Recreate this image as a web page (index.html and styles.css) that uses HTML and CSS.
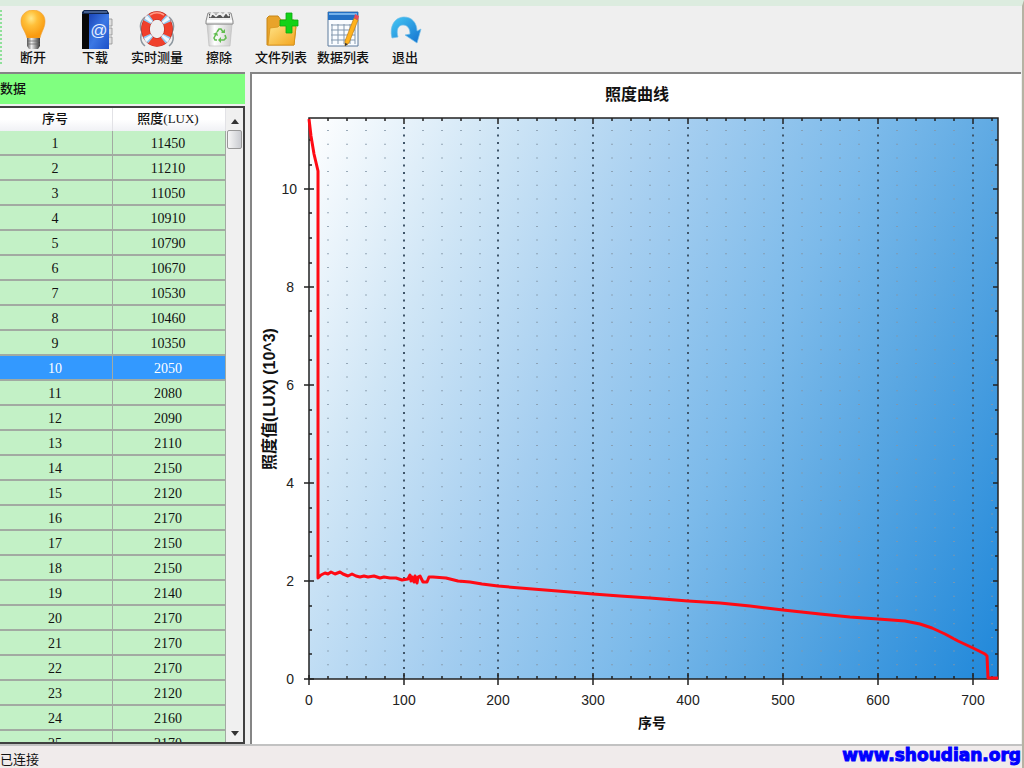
FILE: index.html
```html
<!DOCTYPE html>
<html lang="zh-CN">
<head>
<meta charset="utf-8">
<title>照度曲线</title>
<link rel="stylesheet" href="styles.css">
</head>
<body>
<div class="window">
  <header class="toolbar">
    <span class="grip"></span>
    <button class="tool" type="button">
      <svg class="icon" viewBox="0 0 36 40" aria-hidden="true">
        <defs>
          <radialGradient id="bulb" cx=".42" cy=".3" r=".65"><stop offset="0" stop-color="#ffe88a"/><stop offset=".4" stop-color="#ffc03a"/><stop offset="1" stop-color="#f99a10"/></radialGradient>
          <linearGradient id="metal"><stop offset="0" stop-color="#555"/><stop offset=".35" stop-color="#eee"/><stop offset=".7" stop-color="#888"/><stop offset="1" stop-color="#333"/></linearGradient>
        </defs>
        <path d="M18 0C11 0 6 5 6 11c0 7 4 9 6 17h13c2-8 5-10 5-17C30 5 25 0 18 0z" fill="url(#bulb)" stroke="#f0a030" stroke-width=".6"/>
        <path d="M12 28h13v8l-2 3h-9l-2-3z" fill="url(#metal)"/>
        <path d="M12 31h13M12 34h13" stroke="#666" stroke-width=".7"/>
      </svg>
      <span>断开</span>
    </button>
    <button class="tool" type="button">
      <svg class="icon" viewBox="0 0 36 40" aria-hidden="true">
        <defs><linearGradient id="book" x2="1" y2="1"><stop offset="0" stop-color="#1a45b8"/><stop offset=".5" stop-color="#3c78e4"/><stop offset="1" stop-color="#1d50c8"/></linearGradient></defs>
        <path d="M30 9h5v7h-5zM30 18h5v7h-5zM30 27h5v7h-5z" fill="#ddd" stroke="#888" stroke-width=".7"/>
        <path d="M5 2l2-2h23l2 3v36H5z" fill="#10264f"/>
        <path d="M5 4h7v35H5z" fill="#080808"/>
        <path d="M12 4h20v35H12z" fill="url(#book)"/>
        <path d="M7 2h23" stroke="#7697d0"/>
        <text class="book-mark" x="22" y="26" text-anchor="middle">@</text>
      </svg>
      <span>下载</span>
    </button>
    <button class="tool" type="button">
      <svg class="icon" viewBox="0 0 36 40" aria-hidden="true">
        <path d="M6 7C0 12 1 19 3 22c-2 5-2 10 3 14M30 7c6 5 5 12 3 15 2 5 2 10-3 14" fill="none" stroke="#8c969e" stroke-width="1.5"/>
        <ellipse cx="18" cy="19" rx="11.500" ry="13.500" fill="none" stroke="#b5241a" stroke-width="8.600"/>
        <ellipse cx="18" cy="19" rx="11.500" ry="13.500" fill="none" stroke="#f0402c" stroke-width="7.500"/>
        <ellipse cx="18" cy="19" rx="11.500" ry="13.500" fill="none" stroke="#8fc9f2" stroke-width="8" stroke-dasharray="6 13.700" stroke-dashoffset="-6.800"/>
        <ellipse cx="18" cy="19" rx="11.500" ry="13.500" fill="none" stroke="#eef8ff" stroke-width="8" stroke-dasharray="3 16.700" stroke-dashoffset="-8.300"/>
        <path d="M11 5a14 15 0 0 1 14 0" fill="none" stroke="#ff9a86" stroke-width="1.500"/>
      </svg>
      <span>实时测量</span>
    </button>
    <button class="tool" type="button">
      <svg class="icon" viewBox="0 0 36 40" aria-hidden="true">
        <defs><linearGradient id="bin"><stop offset="0" stop-color="#c8c8c8"/><stop offset=".3" stop-color="#fff"/><stop offset="1" stop-color="#ccc"/></linearGradient></defs>
        <path d="M6 14h25l-2 22H8z" fill="url(#bin)" stroke="#bbb" stroke-width=".6"/>
        <path d="M7 3h23l2 8v3H5v-3z" fill="#eee" stroke="#888"/>
        <path d="M8 4h21v4H8z" fill="#555"/>
        <path d="M9 7l2-4 4 3 4-3 3 3 3-4 3 4" fill="none" stroke="#eee" stroke-width="2"/>
        <path d="M6 11h25" stroke="#fff" stroke-width="2"/>
        <path d="M16 22l2-3h2l2 3M24 25l1 3-2 2h-3M16 30h-2l-1-2 2-4" fill="none" stroke="#62bd50" stroke-width="1.600"/>
        <path d="M20 23l4 0 0-4zM20 27v6l-3-3zM12 24l4-2 1 4z" fill="#62bd50"/>
      </svg>
      <span>擦除</span>
    </button>
    <button class="tool" type="button">
      <svg class="icon" viewBox="0 0 36 40" aria-hidden="true">
        <defs>
          <linearGradient id="folder" x2="1" y2="1"><stop offset="0" stop-color="#ffe58a"/><stop offset="1" stop-color="#f3a51e"/></linearGradient>
        </defs>
        <path d="M4 35V8l2-2h9l3 4h13v6l2 1-2 18z" fill="#e8a32a" stroke="#c78616"/>
        <path d="M5 35L7 18l8-1 3-3h15l-2 21z" fill="url(#folder)" stroke="#d8931c" stroke-width=".8"/>
        <path d="M23 3h6v7h6v6h-6v7h-6v-7h-6v-6h6z" fill="#13d217" stroke="#0aa810" stroke-width=".8"/>
      </svg>
      <span>文件列表</span>
    </button>
    <button class="tool" type="button">
      <svg class="icon" viewBox="0 0 36 40" aria-hidden="true">
        <path d="M3 2h30v34H3z" fill="#f9fcff" stroke="#5d7b9c"/>
        <path d="M3 2h30v8H3z" fill="#2270c4"/>
        <path d="M4 3h28v2H4z" fill="#75b2ea"/>
        <path d="M6 15h24M6 20h24M6 25h24M6 30h24M7 14v20M13 14v20M19 14v20M25 14v20M30 14v20" stroke="#8297ad"/>
        <path d="M29 8l4 2-9 23-4 3 0-5z" fill="#ffb21d" stroke="#bc7b15" stroke-width=".7"/>
        <path d="M30 4l4 2-1 4-4-2z" fill="#e84b58"/>
        <path d="M20 33v3l3-2z" fill="#333"/>
      </svg>
      <span>数据列表</span>
    </button>
    <button class="tool" type="button">
      <svg class="icon" viewBox="0 0 36 40" aria-hidden="true">
        <defs><linearGradient id="arrow" x2="1" y2="1"><stop offset="0" stop-color="#45c8f4"/><stop offset="1" stop-color="#1471cf"/></linearGradient></defs>
        <path d="M5 28C2 16 8 7 17 7c8 0 13 6 13 14l4-2-4 14-12-8 5-1c0-6-3-9-7-9-5 0-7 5-5 12z" fill="url(#arrow)" stroke="#73bfe9" stroke-width=".7"/>
      </svg>
      <span>退出</span>
    </button>
  </header>

  <main class="content">
    <section class="sidebar">
      <h2 class="side-title">数据</h2>
      <div class="grid-box">
        <div class="grid-view">
          <table class="grid">
            <thead><tr><th>序号</th><th>照度(LUX)</th></tr></thead>
            <tbody>
              <tr><td>1</td><td>11450</td></tr>
              <tr><td>2</td><td>11210</td></tr>
              <tr><td>3</td><td>11050</td></tr>
              <tr><td>4</td><td>10910</td></tr>
              <tr><td>5</td><td>10790</td></tr>
              <tr><td>6</td><td>10670</td></tr>
              <tr><td>7</td><td>10530</td></tr>
              <tr><td>8</td><td>10460</td></tr>
              <tr><td>9</td><td>10350</td></tr>
              <tr class="selected"><td>10</td><td>2050</td></tr>
              <tr><td>11</td><td>2080</td></tr>
              <tr><td>12</td><td>2090</td></tr>
              <tr><td>13</td><td>2110</td></tr>
              <tr><td>14</td><td>2150</td></tr>
              <tr><td>15</td><td>2120</td></tr>
              <tr><td>16</td><td>2170</td></tr>
              <tr><td>17</td><td>2150</td></tr>
              <tr><td>18</td><td>2150</td></tr>
              <tr><td>19</td><td>2140</td></tr>
              <tr><td>20</td><td>2170</td></tr>
              <tr><td>21</td><td>2170</td></tr>
              <tr><td>22</td><td>2170</td></tr>
              <tr><td>23</td><td>2120</td></tr>
              <tr><td>24</td><td>2160</td></tr>
              <tr><td>25</td><td>2170</td></tr>
            </tbody>
          </table>
        </div>
        <div class="scrollbar">
          <button class="scroll-btn" type="button" aria-label="向上滚动"><svg viewBox="0 0 8 5" aria-hidden="true"><path d="M0 5l4-5 4 5z"/></svg></button>
          <div class="track"><div class="thumb"></div></div>
          <button class="scroll-btn" type="button" aria-label="向下滚动"><svg viewBox="0 0 8 5" aria-hidden="true"><path d="M0 0l4 5 4-5z"/></svg></button>
        </div>
      </div>
    </section>

    <section class="chart-panel">
      <svg class="chart" viewBox="252 74 769 670" role="img" aria-label="照度曲线">
        <defs>
          <linearGradient id="plot" gradientUnits="userSpaceOnUse" x1="309" y1="118" x2="1089" y2="482">
            <stop offset="0" stop-color="#ffffff"/>
            <stop offset=".2" stop-color="#d0e6f6"/>
            <stop offset=".4" stop-color="#a5cef0"/>
            <stop offset=".6" stop-color="#7cbaea"/>
            <stop offset=".75" stop-color="#5aa7e2"/>
            <stop offset="1" stop-color="#2088da"/>
          </linearGradient>
        </defs>
        <rect x="309" y="118" width="689" height="561" fill="url(#plot)"/>
        <path class="minor" d="M328 130V678M347 130V678M366 130V678M385 130V678M423 130V678M442 130V678M461 130V678M480 130V678M518 130V678M537 130V678M556 130V678M575 130V678M612 130V678M631 130V678M650 130V678M669 130V678M707 130V678M726 130V678M745 130V678M764 130V678M802 130V678M821 130V678M840 130V678M859 130V678M897 130V678M916 130V678M935 130V678M954 130V678M992 130V678"/>
        <path class="major" d="M404 127V678M498 127V678M593 127V678M688 127V678M783 127V678M878 127V678M973 127V678"/>
        <rect class="frame" x="309" y="118" width="689" height="561"/>
        <path class="tick" d="M309 675v10M404 673v12M498 673v12M593 673v12M688 673v12M783 673v12M878 673v12M973 673v12M404 118v6M498 118v6M593 118v6M688 118v6M783 118v6M878 118v6M973 118v6"/>
        <path class="tick" d="M304 679h10M304 581h10M304 483h10M304 385h10M304 287h10M304 189h10M993 581h5M993 483h5M993 385h5M993 287h5M993 189h5"/>
        <path class="tick" d="M328 676v3M347 676v3M366 676v3M385 676v3M423 676v3M442 676v3M461 676v3M480 676v3M518 676v3M537 676v3M556 676v3M575 676v3M612 676v3M631 676v3M650 676v3M669 676v3M707 676v3M726 676v3M745 676v3M764 676v3M802 676v3M821 676v3M840 676v3M859 676v3M897 676v3M916 676v3M935 676v3M954 676v3M992 676v3"/>
        <path class="tick" d="M328 118v3M347 118v3M366 118v3M385 118v3M423 118v3M442 118v3M461 118v3M480 118v3M518 118v3M537 118v3M556 118v3M575 118v3M612 118v3M631 118v3M650 118v3M669 118v3M707 118v3M726 118v3M745 118v3M764 118v3M802 118v3M821 118v3M840 118v3M859 118v3M897 118v3M916 118v3M935 118v3M954 118v3M992 118v3"/>
        <path class="tick" d="M309 140h3M309 165h3M309 213h3M309 238h3M309 263h3M309 311h3M309 336h3M309 360h3M309 410h3M309 434h3M309 459h3M309 508h3M309 532h3M309 556h3M309 606h3M309 630h3M309 654h3"/>
        <path class="tick" d="M995 140h3M995 165h3M995 213h3M995 238h3M995 263h3M995 311h3M995 336h3M995 360h3M995 410h3M995 434h3M995 459h3M995 508h3M995 532h3M995 556h3M995 606h3M995 630h3M995 654h3"/>
        <path class="curve" d="M309 119L311 136L314 154L318 171V578L321 575L325 573L328 574L331 572L335 574L340 572L343 574L348 576L352 574L356 576L360 577L364 576L368 577L374 576L380 578L384 577L390 578L396 578L402 580L408 579L410 575L411 581L412 577L414 582L415 576L417 583L418 577L420 576L423 582L427 582L429 577L433 577L446 578L458 581L470 582L482 584L498 586L520 588L545 590L570 592L593 594L620 596L650 598L688 601L720 603L750 606L783 610L820 614L850 617L878 619L905 621L920 624L932 628L945 634L958 641L973 648L985 654L987 656L988 678H998"/>
        <text class="title" x="637" y="100">照度曲线</text>
        <g class="label end">
          <text x="297" y="194">10</text><text x="294" y="292">8</text><text x="294" y="390">6</text><text x="294" y="488">4</text><text x="294" y="586">2</text><text x="294" y="684">0</text>
        </g>
        <g class="label">
          <text x="309" y="705">0</text><text x="404" y="705">100</text><text x="498" y="705">200</text><text x="593" y="705">300</text><text x="688" y="705">400</text><text x="783" y="705">500</text><text x="878" y="705">600</text><text x="973" y="705">700</text>
        </g>
        <text class="axis" x="652" y="728">序号</text>
        <text class="axis vertical" transform="translate(275 399) rotate(-90)">照度值(LUX) (10^3)</text>
      </svg>
    </section>
  </main>

  <footer class="status">
    <span>已连接</span>
    <a class="site" href="http://www.shoudian.org">www.shoudian.org</a>
  </footer>
</div>
</body>
</html>
```
FILE: styles.css
```css
* { box-sizing: border-box; }

body {
  margin: 0;
  background: #efefef;
  color: #111;
  font: 13px/16px "Liberation Sans", "Noto Sans CJK SC", sans-serif;
}

.window {
  display: flex;
  flex-direction: column;
  height: 100vh;
  border-top: 6px solid #dcecdf;
  border-right: 2px solid #b5b3a4;
  overflow: hidden;
}

.toolbar {
  display: flex;
  flex: none;
  padding: 4px 0 8px;
}

.grip {
  width: 2px;
  border-left: 2px dotted #8fe09a;
}

.tool {
  display: flex;
  flex-direction: column;
  align-items: center;
  width: 62px;
  padding: 0;
  border: 0;
  background: none;
  color: #111;
  font: 500 13px/14px "Noto Sans CJK SC", sans-serif;
  white-space: nowrap;
}

.icon {
  width: 36px;
  height: 40px;
}

.book-mark {
  fill: #e4eeff;
  font: 17px "Liberation Sans", sans-serif;
}

.content {
  display: flex;
  flex: 1;
  min-height: 0;
  gap: 5px;
  padding-right: 1px;
}

.sidebar {
  display: flex;
  flex-direction: column;
  flex: none;
  width: 245px;
  border-top: 2px solid #858585;
}

.side-title {
  margin: 0 0 2px;
  padding: 6px 0 8px;
  background: #80ff80;
  font: 500 13px/16px "Noto Sans CJK SC", sans-serif;
}

.grid-box {
  display: flex;
  flex: 1;
  min-height: 0;
  border: solid #404040;
  border-width: 2px 2px 2px 0;
}

.grid-view {
  flex: 1;
  overflow: hidden;
}

.grid {
  width: 100%;
  border-collapse: separate;
  border-spacing: 0;
  table-layout: fixed;
  text-align: center;
  font-family: "Liberation Serif", "Noto Sans CJK SC", serif;
}

.grid th,
.grid td {
  padding: 0 2px 0 0;
}

.grid th {
  height: 23px;
  padding-bottom: 2px;
  border-right: 1px solid #e2e2e6;
  background: linear-gradient(#fff 50%, #f0f1f5);
  font-weight: 500;
  font-size: 13px;
}

.grid td {
  height: 25px;
  padding-top: 2px;
  border-right: 1px solid #a2aaa2;
  border-bottom: 2px solid #a2aaa2;
  background: #c3f1c6;
  font-size: 14px;
}

.grid .selected td {
  background: #3399ff;
  color: #fff;
}

.scrollbar {
  display: flex;
  flex-direction: column;
  width: 17px;
  background: #f0f0f0;
}

.scroll-btn {
  height: 22px;
  padding: 0;
  border: 0;
  background: none;
}

.scroll-btn svg {
  width: 8px;
  height: 5px;
  fill: #333;
}

.track {
  flex: 1;
  padding: 0 1px;
}

.thumb {
  height: 19px;
  border: 1px solid #989898;
  border-radius: 2px;
  background: linear-gradient(90deg, #f6f6f6, #c9cbd0);
}

.chart-panel {
  flex: 1;
  min-width: 0;
  border: solid #858585;
  border-width: 2px 0 0 2px;
  background: #fff;
}

.chart {
  display: block;
  width: 100%;
  height: 100%;
}

.minor {
  stroke: #8497a8;
  stroke-width: 2;
  stroke-dasharray: 1 12.700;
  opacity: .8;
}

.major {
  stroke: #40566a;
  stroke-width: 2;
  stroke-dasharray: 2 5.500;
}

.frame,
.tick {
  fill: none;
  stroke: #222;
  stroke-width: 1.500;
}

.curve {
  fill: none;
  stroke: #ff0a14;
  stroke-width: 3;
  stroke-linejoin: round;
}

.label,
.axis,
.title {
  fill: #222;
  text-anchor: middle;
}

.label { font-size: 14px; }

.label.end { text-anchor: end; }

.axis {
  fill: #111;
  font: bold 14px "Liberation Sans", "Noto Sans CJK SC", sans-serif;
}

.axis.vertical { font-size: 16px; }

.title {
  fill: #111;
  font: bold 16px "Noto Sans CJK SC", sans-serif;
}

.status {
  display: flex;
  flex: none;
  justify-content: space-between;
  height: 24px;
  padding-right: 1px;
  border-top: 2px solid #c2c2c2;
  background: #f0ebeb;
}

.status span {
  padding-top: 6px;
}

.site {
  color: #0000ff;
  font: bold 17px/18px "DejaVu Sans", sans-serif;
  text-decoration: none;
  -webkit-text-stroke: 1px #0000ff;
}
```
